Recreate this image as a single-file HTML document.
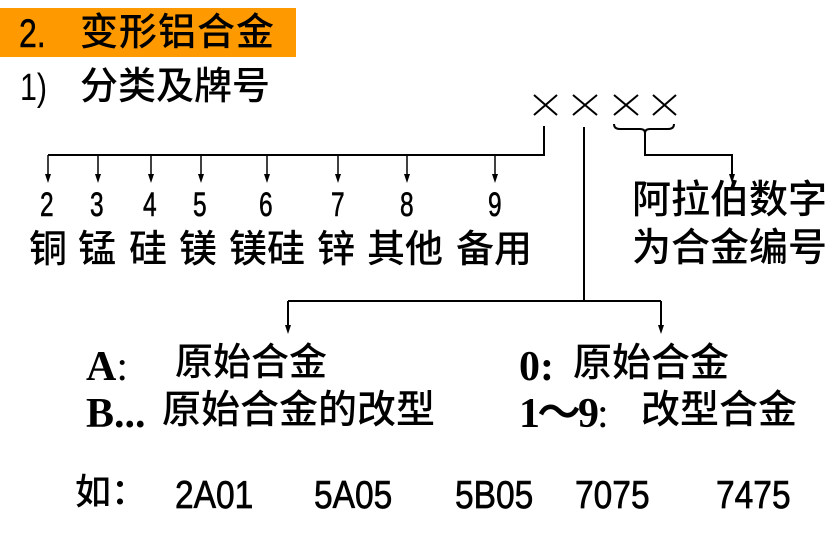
<!DOCTYPE html>
<html><head><meta charset="utf-8"><style>
html,body{margin:0;padding:0;background:#fff;}
body{width:840px;height:534px;position:relative;overflow:hidden;font-family:"Liberation Sans","Noto Sans CJK SC",sans-serif;color:#000;}
.t{position:absolute;line-height:1;white-space:nowrap;}
.cjk{font-family:"Liberation Sans","Noto Sans CJK SC",sans-serif;font-weight:500;}
.n{display:inline-block;transform:scaleX(0.72);transform-origin:left top;}
.m{display:inline-block;transform:scaleX(0.86);transform-origin:left top;-webkit-text-stroke:0.7px #000;}
.serif{font-family:"Liberation Serif",serif;font-weight:bold;}
</style></head><body>
<div style="position:absolute;left:0;top:8px;width:296px;height:49px;background:#FF9900;"></div>
<div class="t" style="left:19px;top:14px;font-size:40px;"><span class="n" style="transform:scaleX(0.8);-webkit-text-stroke:0.5px #000">2.</span></div>
<div class="t cjk" style="left:80px;top:14px;font-size:38px;letter-spacing:1px;">变形铝合金</div>
<div class="t" style="left:20px;top:69px;font-size:38px;"><span class="n" style="transform:scaleX(0.8)">1)</span></div>
<div class="t cjk" style="left:80px;top:68px;font-size:38px;">分类及牌号</div>

<svg width="840" height="534" style="position:absolute;left:0;top:0" xmlns="http://www.w3.org/2000/svg">
<g stroke="#000" stroke-width="2" fill="none">
<path d="M534 95 L557 115 M557 95 L534 115"/>
<path d="M573 95 L597 115 M597 95 L573 115"/>
<path d="M614 95 L638 115 M638 95 L614 115"/>
<path d="M653 95 L676 115 M676 95 L653 115"/>
<path d="M544 126 V155 H48"/>
<path d="M584 127 V301"/>
<path d="M288 301 H661"/>
<path d="M288 301 V326 M661 301 V326"/>
<path d="M614 124 Q614 129 620 129 H640 Q645 129 645 133 Q645 129 650 129 H668 Q674 129 674 124"/>
<path d="M645 131 V155 H732 V175"/>
</g>
<g stroke="#000" stroke-width="1.5">
<line x1="48" y1="155" x2="48" y2="175"/><line x1="98" y1="155" x2="98" y2="175"/>
<line x1="151" y1="155" x2="151" y2="175"/><line x1="201" y1="155" x2="201" y2="175"/>
<line x1="267" y1="155" x2="267" y2="175"/><line x1="338" y1="155" x2="338" y2="175"/>
<line x1="407" y1="155" x2="407" y2="175"/><line x1="495" y1="155" x2="495" y2="175"/>
</g>
<g fill="#000">
<path d="M45 174 H51 L48 183Z"/><path d="M95 174 H101 L98 183Z"/>
<path d="M148 174 H154 L151 183Z"/><path d="M198 174 H204 L201 183Z"/>
<path d="M264 174 H270 L267 183Z"/><path d="M335 174 H341 L338 183Z"/>
<path d="M404 174 H410 L407 183Z"/><path d="M492 174 H498 L495 183Z"/>
<path d="M729 174 H735 L732 183Z"/>
<path d="M285 325 H291 L288 334Z"/><path d="M658 325 H664 L661 334Z"/>
</g>
</svg>

<div class="t" style="left:40px;top:188px;font-size:34px;"><span class="n" style="-webkit-text-stroke:0.6px #000">2</span></div>
<div class="t" style="left:90px;top:188px;font-size:34px;"><span class="n" style="-webkit-text-stroke:0.6px #000">3</span></div>
<div class="t" style="left:143px;top:188px;font-size:34px;"><span class="n" style="-webkit-text-stroke:0.6px #000">4</span></div>
<div class="t" style="left:193px;top:188px;font-size:34px;"><span class="n" style="-webkit-text-stroke:0.6px #000">5</span></div>
<div class="t" style="left:259px;top:188px;font-size:34px;"><span class="n" style="-webkit-text-stroke:0.6px #000">6</span></div>
<div class="t" style="left:331px;top:188px;font-size:34px;"><span class="n" style="-webkit-text-stroke:0.6px #000">7</span></div>
<div class="t" style="left:400px;top:188px;font-size:34px;"><span class="n" style="-webkit-text-stroke:0.6px #000">8</span></div>
<div class="t" style="left:488px;top:188px;font-size:34px;"><span class="n" style="-webkit-text-stroke:0.6px #000">9</span></div>

<div class="t cjk" style="left:29px;top:231px;font-size:38px;">铜</div>
<div class="t cjk" style="left:78px;top:231px;font-size:38px;">锰</div>
<div class="t cjk" style="left:129px;top:231px;font-size:38px;">硅</div>
<div class="t cjk" style="left:179px;top:231px;font-size:38px;">镁</div>
<div class="t cjk" style="left:229px;top:231px;font-size:38px;">镁硅</div>
<div class="t cjk" style="left:317px;top:231px;font-size:38px;">锌</div>
<div class="t cjk" style="left:367px;top:231px;font-size:38px;">其他</div>
<div class="t cjk" style="left:456px;top:231px;font-size:38px;">备用</div>

<div class="t cjk" style="left:632px;top:181px;font-size:39px;">阿拉伯数字</div>
<div class="t cjk" style="left:632px;top:229px;font-size:39px;">为合金编号</div>

<div class="t serif" style="left:86px;top:346px;font-size:42px;">A<span style="font-weight:normal">:</span></div>
<div class="t cjk" style="left:175px;top:344px;font-size:38px;">原始合金</div>
<div class="t serif" style="left:86px;top:393px;font-size:42px;">B...</div>
<div class="t cjk" style="left:162px;top:391px;font-size:39px;">原始合金的改型</div>
<div class="t serif" style="left:519px;top:346px;font-size:42px;">0:</div>
<div class="t cjk" style="left:573px;top:344px;font-size:39px;">原始合金</div>
<div class="t serif" style="left:519px;top:393px;font-size:42px;letter-spacing:-2px;">1～9<span style="font-weight:normal">:</span></div>
<div class="t cjk" style="left:641px;top:391px;font-size:39px;">改型合金</div>

<div class="t cjk" style="left:75px;top:474px;font-size:36px;">如：</div>
<div class="t" style="left:175px;top:476px;font-size:39px;"><span class="m">2A01</span></div>
<div class="t" style="left:314px;top:476px;font-size:39px;"><span class="m">5A05</span></div>
<div class="t" style="left:455px;top:476px;font-size:39px;"><span class="m">5B05</span></div>
<div class="t" style="left:575px;top:476px;font-size:39px;"><span class="m">7075</span></div>
<div class="t" style="left:716px;top:476px;font-size:39px;"><span class="m">7475</span></div>
</body></html>
